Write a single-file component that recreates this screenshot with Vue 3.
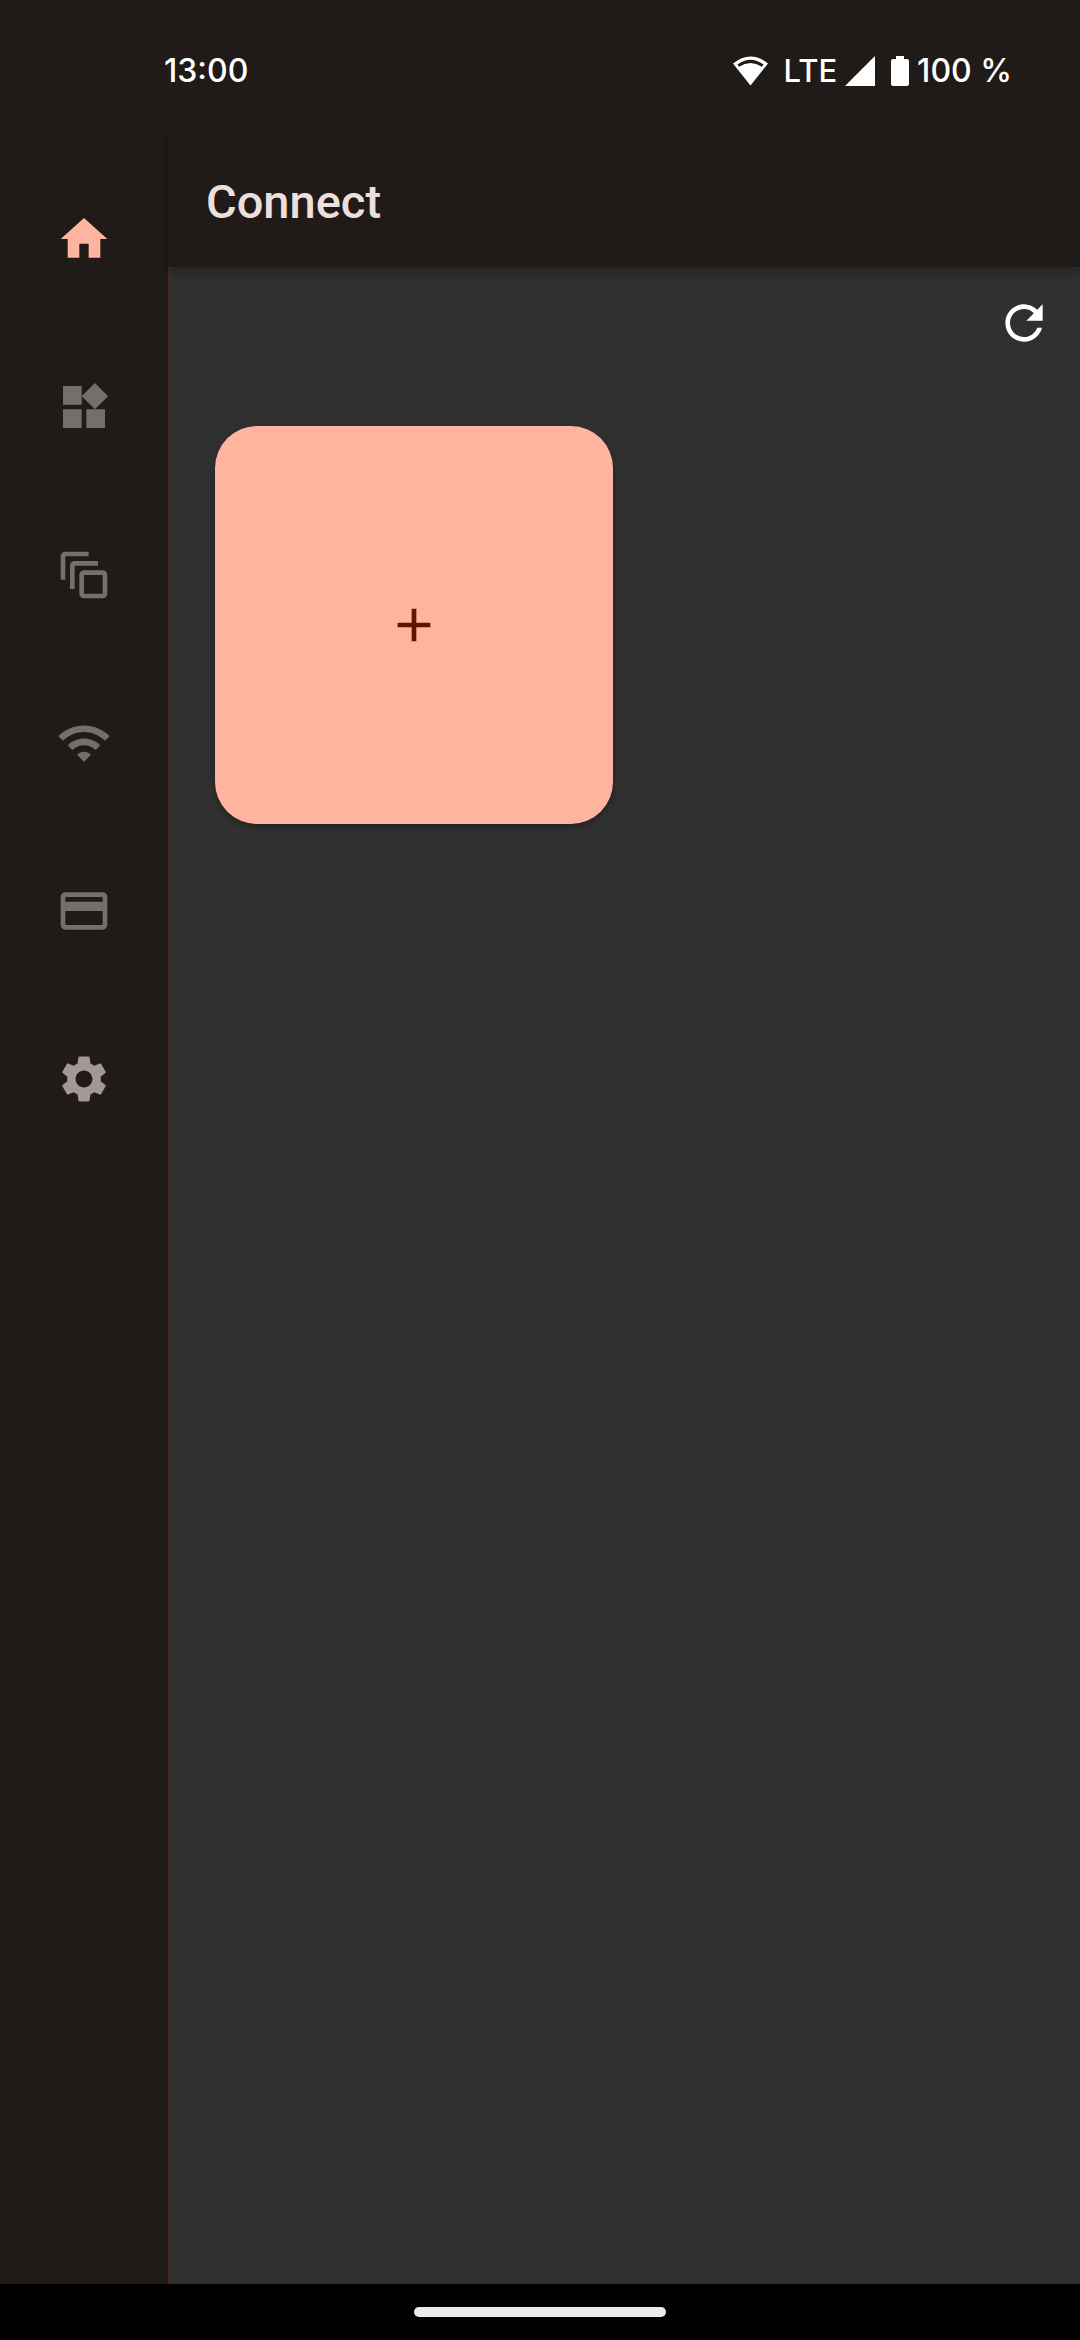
<script setup>
import { ref } from 'vue'

const active = ref('Home')

const items = [
  { name: 'Home', path: 'M10 20v-6h4v6h5v-8h3L12 3 2 12h3v8z' },
  {
    name: 'Widgets',
    path: 'M13 13v8h8v-8h-8zM3 21h8v-8H3v8zM3 3v8h8V3H3zm13.66-1.31L11 7.34 16.66 13l5.66-5.66-5.66-5.65z',
  },
  {
    name: 'Collections',
    path: 'M14 2H4c-1.1 0-2 .9-2 2v10h2V4h10V2zm4 4H8c-1.1 0-2 .9-2 2v10h2V8h10V6zm2 4h-8c-1.1 0-2 .9-2 2v8c0 1.1.9 2 2 2h8c1.1 0 2-.9 2-2v-8c0-1.1-.9-2-2-2zm0 10h-8v-8h8v8z',
  },
  {
    name: 'Wi-Fi',
    path: 'M1 9l2 2c4.97-4.97 13.03-4.97 18 0l2-2C16.93 2.93 7.08 2.93 1 9zm8 8l3 3 3-3c-1.65-1.66-4.34-1.66-6 0zm-4-4l2 2c2.76-2.76 7.24-2.76 10 0l2-2C15.14 9.14 8.87 9.14 5 13z',
  },
  {
    name: 'Cards',
    path: 'M20 4H4c-1.11 0-1.99.89-1.99 2L2 18c0 1.11.89 2 2 2h16c1.11 0 2-.89 2-2V6c0-1.11-.89-2-2-2zm0 14H4v-6h16v6zm0-10H4V6h16v2z',
  },
  {
    name: 'Settings',
    enabled: true,
    path: 'M19.14 12.94c.04-.3.06-.61.06-.94 0-.32-.02-.64-.07-.94l2.03-1.58c.18-.14.23-.41.12-.61l-1.92-3.32c-.12-.22-.37-.29-.59-.22l-2.39.96c-.5-.38-1.03-.7-1.62-.94l-.36-2.54c-.04-.24-.24-.41-.48-.41h-3.84c-.24 0-.43.17-.47.41l-.36 2.54c-.59.24-1.13.57-1.62.94l-2.39-.96c-.22-.08-.47 0-.59.22L2.74 8.87c-.12.21-.08.47.12.61l2.03 1.58c-.05.3-.09.63-.09.94s.02.64.07.94l-2.03 1.58c-.18.14-.23.41-.12.61l1.92 3.32c.12.22.37.29.59.22l2.39-.96c.5.38 1.03.7 1.62.94l.36 2.54c.05.24.24.41.48.41h3.84c.24 0 .44-.17.47-.41l.36-2.54c.59-.24 1.13-.56 1.62-.94l2.39.96c.22.08.47 0 .59-.22l1.92-3.32c.12-.22.07-.47-.12-.61l-2.01-1.58zM12 15.6c-1.98 0-3.6-1.62-3.6-3.6s1.62-3.6 3.6-3.6 3.6 1.62 3.6 3.6-1.62 3.6-3.6 3.6z',
  },
]
</script>

<template>
  <div class="screen">
    <div class="status">
      <time class="clock">13:00</time>
      <div class="indicators">
        <svg class="wifi" viewBox="0 0 35 30" aria-hidden="true">
          <path
            fill="#fff"
            fill-rule="evenodd"
            d="M0 7.5Q17.500-6.500 35 7.5L17.500 29.500zM4.500 8.500 6 10.700Q17.500 3.500 29 10.700L30.500 8.500Q17.500-1 4.500 8.500z"
          />
        </svg>
        <span class="network">LTE</span>
        <svg class="signal" viewBox="0 0 30 30" aria-hidden="true">
          <path d="M0 30 30 0v30z" fill="#fff" />
        </svg>
        <svg class="battery" viewBox="0 0 18 30" aria-hidden="true">
          <path d="M5 0h8v3h3a2 2 0 0 1 2 2v23a2 2 0 0 1-2 2H2a2 2 0 0 1-2-2V5a2 2 0 0 1 2-2h3z" fill="#fff" />
        </svg>
        <span>100 %</span>
      </div>
    </div>

    <div class="body">
      <nav class="rail" aria-label="Main">
        <button
          v-for="item in items"
          :key="item.name"
          type="button"
          class="rail-item"
          :class="{ enabled: item.enabled, active: active === item.name }"
          :aria-label="item.name"
          @click="active = item.name"
        >
          <svg class="icon" viewBox="0 0 24 24" aria-hidden="true"><path :d="item.path" /></svg>
        </button>
      </nav>

      <div class="content">
        <header class="appbar"><h1>Connect</h1></header>
        <main class="main">
          <div class="tools">
            <button type="button" class="refresh" aria-label="Refresh">
              <svg class="icon" viewBox="0 0 24 24" aria-hidden="true">
                <path d="M17.65 6.35C16.2 4.9 14.21 4 12 4c-4.42 0-7.99 3.58-7.99 8s3.57 8 7.99 8c3.73 0 6.84-2.55 7.73-6h-2.08c-.82 2.33-3.04 4-5.65 4-3.31 0-6-2.69-6-6s2.69-6 6-6c1.66 0 3.14.69 4.22 1.78L13 11h7V4l-2.35 2.35z" />
              </svg>
            </button>
          </div>
          <div class="grid">
            <button type="button" class="card" aria-label="Add">
              <svg class="icon" viewBox="0 0 24 24" aria-hidden="true">
                <path d="M19 13h-6v6h-2v-6H5v-2h6V5h2v6h6v2z" />
              </svg>
            </button>
          </div>
        </main>
      </div>
    </div>

    <footer class="gesture"><span class="handle"></span></footer>
  </div>
</template>

<style>
body {
  background: #201a18;
}
</style>

<style scoped>
.screen {
  display: flex;
  flex-direction: column;
  min-height: 100vh;
  background: #201a18;
  font-family: Roboto, sans-serif;
}

button {
  display: flex;
  align-items: center;
  justify-content: center;
  margin: 0;
  padding: 0;
  border: 0;
  background: none;
  cursor: pointer;
}

.icon {
  display: block;
  width: 56px;
  height: 56px;
  fill: currentColor;
}

.status {
  display: flex;
  align-items: center;
  justify-content: space-between;
  box-sizing: border-box;
  height: 136px;
  padding: 5px 68px 0 164px;
  color: #fff;
  font: 500 32px/40px Inter, sans-serif;
}

.indicators {
  display: flex;
  align-items: center;
}

.wifi {
  width: 35px;
  height: 30px;
  margin-right: 16px;
}

.network {
  font-size: 31px;
}

.signal {
  width: 30px;
  height: 30px;
  margin: 0 16px 0 8px;
}

.battery {
  width: 18px;
  height: 30px;
  margin-right: 8px;
}

.body {
  display: flex;
  flex: 1;
}

.rail {
  flex: none;
  width: 168px;
  padding-top: 19px;
}

.rail-item {
  width: 100%;
  height: 168px;
  color: #726f6d;
}

.rail-item.enabled {
  color: #a39896;
}

.rail-item.active {
  color: #ffb4a0;
}

.content {
  display: flex;
  flex: 1;
  flex-direction: column;
}

.appbar {
  position: relative;
  display: flex;
  align-items: center;
  height: 131px;
  padding: 0 38px;
  background: #201a18;
  box-shadow: 0 4px 12px rgba(0, 0, 0, 0.3);
  clip-path: inset(0 0 -24px -6px);
}

.appbar h1 {
  margin: 0;
  color: #ede0dc;
  font-size: 47px;
  font-weight: 500;
  line-height: 56px;
}

.main {
  flex: 1;
  border-left: 1px solid #4a2c23;
  background: #303030;
}

.tools {
  display: flex;
  justify-content: flex-end;
  padding: 28px 28px 0;
}

.refresh {
  color: #fff;
}

.grid {
  display: grid;
  grid-template-columns: repeat(2, 1fr);
  gap: 23px;
  padding: 75px 46px;
}

.card {
  aspect-ratio: 1;
  border-radius: 42px;
  background: #ffb4a0;
  box-shadow: 0 3px 6px rgba(0, 0, 0, 0.3);
  color: #5f1500;
}

.gesture {
  display: flex;
  align-items: center;
  justify-content: center;
  height: 56px;
  background: #000;
}

.handle {
  width: 252px;
  height: 10px;
  border-radius: 5px;
  background: #ebebeb;
}
</style>
